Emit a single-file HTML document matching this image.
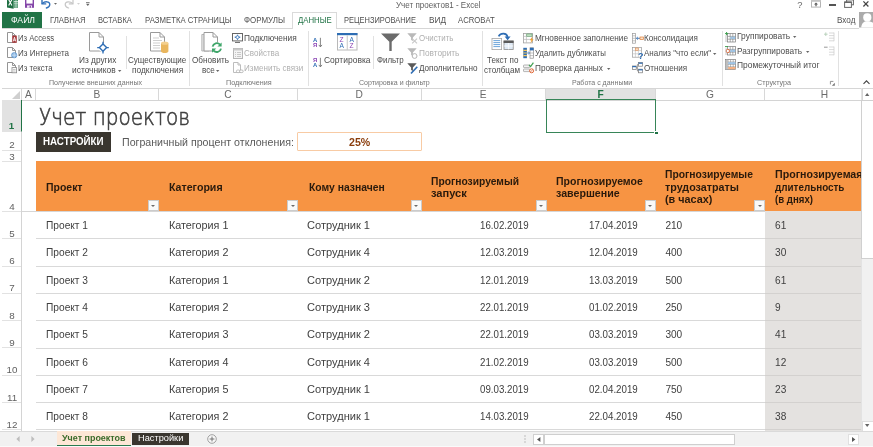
<!DOCTYPE html>
<html lang="ru">
<head>
<meta charset="utf-8">
<title>Учет проектов1 - Excel</title>
<style>
*{box-sizing:border-box;margin:0;padding:0}
html,body{width:873px;height:447px;overflow:hidden;background:#fff}
body{font-family:"Liberation Sans",sans-serif;color:#444;position:relative}
#app{will-change:transform;position:absolute;left:0;top:0;width:873px;height:447px;overflow:hidden;background:#fff}
.a{position:absolute;white-space:nowrap;transform-origin:0 50%}
svg{position:absolute;overflow:visible}
.ttl{top:-0.4px;font-size:9px;color:#606060;line-height:11px}
.tab{top:14.6px;font-size:8.2px;line-height:12px;color:#505050}
#file{left:2px;top:12px;width:40px;height:16px;background:#217346;color:#fff;text-align:center;font-size:8.5px;line-height:16px}
#tabline{left:2px;top:28px;width:857px;height:1px;background:#d6d6d6}
#acttab{left:292px;top:12px;width:45px;height:17px;border:1px solid #dadada;border-bottom:none;background:#fff}
.rt{font-size:8.4px;line-height:11px;color:#4c4c4c}
.rt.g{color:#b0b0b0}
.gl{font-size:7.2px;line-height:10px;color:#757575}
.gs{top:31px;width:1px;height:55px;background:#e1e1e1}
.ss{width:1px;background:#e1e1e1}
#ribline{left:2px;top:87.6px;width:860px;height:1px;background:#d6d6d6}
.ch{top:88.6px;height:11.4px;font-size:10.2px;line-height:12.6px;color:#6a6a6a;text-align:center;border-right:1px solid #d8d8d8;background:#fff}
.rh{left:2px;width:20px;font-size:9.8px;color:#606060;text-align:center;border-bottom:1px solid #e2e2e2;background:#fff}
.rh span{position:absolute;left:0;right:0;bottom:-0.6px;line-height:10px}
.hd{font-size:10px;font-weight:bold;color:#2a1a0c;line-height:13.2px;white-space:pre}
.fb{width:11px;height:11px;background:#f9f9f9;border:1px solid #cbcbcb;top:200.2px}
.fb:after{content:"";position:absolute;left:2.5px;top:3.5px;border-left:2px solid transparent;border-right:2px solid transparent;border-top:2.4px solid #6a6a6a}
.c{font-size:10.1px;color:#404040;line-height:13px}
.rl{left:35.5px;width:729.5px;height:1px;background:#d9d9d9}

</style>
</head>
<body>
<div id="app">
<!-- sec_title -->
<svg style="left:7px;top:-5px" width="12" height="14" viewBox="0 0 12 14"><rect x="6" y="1.5" width="5" height="11" fill="#e8f3ec"/><path d="M6.6 3.4h4.4M6.6 5.6h4.4M6.6 7.8h4.4M6.6 10h4.4M6.6 12h4.4" stroke="#3f8f62" stroke-width="1.3"/><path d="M9 1.5V12.6" stroke="#e8f3ec" stroke-width="0.6"/><path d="M0 1.6 L6.6 0.2 V13.8 L0 12.4 Z" fill="#1f6f43"/><path d="M1.7 4.6 L4.9 10.6 M4.9 4.6 L1.7 10.6" stroke="#fff" stroke-width="1.1"/></svg>
<svg style="left:25px;top:-4px" width="9" height="12" viewBox="0 0 9 12"><path d="M0 0 H9 V11.8 H0 Z" fill="#8446a8"/><rect x="1.4" y="0" width="6.2" height="7.6" fill="#fff"/><rect x="2" y="9.4" width="5" height="2.4" fill="#f1e6f7"/><rect x="4.6" y="9.8" width="1.3" height="2" fill="#8446a8"/></svg>
<svg style="left:41px;top:-1px" width="10" height="10" viewBox="0 0 10 10"><path d="M1.4 4.4 C3.6 2.2 8.8 2 8.8 5.4 C8.8 7.4 7.2 8.4 5.4 9" fill="none" stroke="#2f6fb8" stroke-width="1.35" stroke-linecap="round"/><path d="M1 1.2 V4.9 H4.7" fill="none" stroke="#2f6fb8" stroke-width="1.4" stroke-linecap="round" stroke-linejoin="round"/></svg>
<svg style="left:54.2px;top:2.8px" width="3" height="1.8" viewBox="0 0 3 1.8"><path d="M0 0H3L1.5 1.8Z" fill="#666"/></svg>
<svg style="left:64px;top:-1px" width="10" height="10" viewBox="0 0 10 10"><path d="M8.6 4.4 C6.4 2.2 1.2 2 1.2 5.4 C1.2 7.4 2.8 8.4 4.6 9" fill="none" stroke="#c6c6c6" stroke-width="1.2" stroke-linecap="round"/><path d="M9 1.2 V4.9 H5.3" fill="none" stroke="#c6c6c6" stroke-width="1.2" stroke-linecap="round" stroke-linejoin="round"/></svg>
<svg style="left:77.2px;top:2.8px" width="3" height="1.8" viewBox="0 0 3 1.8"><path d="M0 0H3L1.5 1.8Z" fill="#d0d0d0"/></svg>
<svg style="left:86.4px;top:1.6px" width="3.6" height="4" viewBox="0 0 3.6 4"><path d="M0 0H3.6V0.8H0Z M0 1.8H3.6L1.8 3.9Z" fill="#666"/></svg>
<div class="a ttl" style="transform:scaleX(0.8943);left:395.8px">Учет проектов1 - Excel</div>
<div class="a" style="left:797.3px;top:-1.4px;font-size:9.4px;line-height:11px;color:#6a6a6a">?</div>
<svg style="left:811px;top:-0.5px" width="10" height="8" viewBox="0 0 10 8"><rect x="0.5" y="0.5" width="9" height="6.6" fill="#fff" stroke="#b4b4b4"/><rect x="0" y="0" width="10" height="1.8" fill="#c4c4c4"/><path d="M5 2.6 L7 4.6 H5.6 V6.2 H4.4 V4.6 H3Z" fill="#555"/></svg>
<div class="a" style="left:829px;top:4.3px;width:6.6px;height:1.5px;background:#555"></div>
<svg style="left:844px;top:-1px" width="10" height="9" viewBox="0 0 10 9"><rect x="2.6" y="0.4" width="6.8" height="5.4" fill="#fff" stroke="#666" stroke-width="1"/><rect x="2.4" y="0" width="7.2" height="1.4" fill="#666"/><rect x="0.6" y="3" width="6.8" height="5.4" fill="#fff" stroke="#666" stroke-width="1"/><rect x="0.4" y="2.6" width="7.2" height="1.4" fill="#666"/></svg>
<svg style="left:863.3px;top:1px" width="5.8" height="5.9" viewBox="0 0 5.8 5.9"><path d="M0.4 0.4L5.4 5.5M5.4 0.4L0.4 5.5" stroke="#444" stroke-width="1.25"/></svg>
<div id="tabline" class="a" style=""></div>
<div id="acttab" class="a" style=""></div>
<div id="file" class="a" style=""></div>
<div class="a tab" style="transform:scaleX(1.0542);left:10.5px;color:#fff">ФАЙЛ</div>
<div class="a tab" style="transform:scaleX(0.9478);left:49.9px">ГЛАВНАЯ</div>
<div class="a tab" style="transform:scaleX(0.9205);left:98.2px">ВСТАВКА</div>
<div class="a tab" style="transform:scaleX(0.9502);left:144.5px">РАЗМЕТКА СТРАНИЦЫ</div>
<div class="a tab" style="transform:scaleX(0.9683);left:243.5px">ФОРМУЛЫ</div>
<div class="a tab" style="transform:scaleX(0.9509);left:297.5px;color:#217346">ДАННЫЕ</div>
<div class="a tab" style="transform:scaleX(0.9143);left:343.5px">РЕЦЕНЗИРОВАНИЕ</div>
<div class="a tab" style="transform:scaleX(1.0055);left:428.5px">ВИД</div>
<div class="a tab" style="transform:scaleX(0.9414);left:457.5px">ACROBAT</div>
<div class="a" style="transform:scaleX(0.9708);left:837.1px;top:14px;font-size:8.4px;line-height:12px;color:#505050">Вход</div>
<svg style="left:858.6px;top:12.2px" width="14.5" height="15.5" viewBox="0 0 14.5 15.5"><rect width="14.5" height="15.5" fill="#ababab"/><circle cx="8.3" cy="5.4" r="4.1" fill="#fff"/><path d="M2.2 15.5 C2.6 11 5 9.2 8.3 9.2 C11.4 9.2 13.4 10 14.5 11.4 V15.5Z" fill="#fff"/></svg>
<!-- sec_ribbon -->
<svg style="left:6.5px;top:32px" width="11" height="12" viewBox="0 0 11 12"><path d="M0.5 0.5 H5.5 L8.5 3.5 V10.5 H0.5 Z" fill="#fff" stroke="#959595"/><path d="M5.5 0.5 V3.5 H8.5" fill="none" stroke="#959595"/><rect x="5.2" y="3.6" width="4.6" height="7.2" fill="#a4373a"/><path d="M6.3 9.4 L7.5 5.2 L8.7 9.4 M6.7 8.1 H8.3" stroke="#fff" stroke-width="0.85" fill="none"/></svg>
<svg style="left:6.5px;top:47px" width="11" height="12" viewBox="0 0 11 12"><path d="M0.5 0.5 H5.5 L8.5 3.5 V10.5 H0.5 Z" fill="#fff" stroke="#959595"/><path d="M5.5 0.5 V3.5 H8.5" fill="none" stroke="#959595"/><circle cx="7.2" cy="8.2" r="2.7" fill="#8db8e2" stroke="#4a86c5" stroke-width="0.6"/><path d="M4.6 8.2H9.8M7.2 5.6V10.8" stroke="#e3eefa" stroke-width="0.5"/></svg>
<svg style="left:6.5px;top:62px" width="11" height="12" viewBox="0 0 11 12"><path d="M0.5 0.5 H5.5 L8.5 3.5 V10.5 H0.5 Z" fill="#fff" stroke="#959595"/><path d="M5.5 0.5 V3.5 H8.5" fill="none" stroke="#959595"/><rect x="5" y="5.6" width="4.6" height="5.2" fill="#fff" stroke="#8a8a8a" stroke-width="0.8"/><path d="M6 7.4H8.6M6 9H8.6" stroke="#9a9a9a" stroke-width="0.6"/></svg>
<div class="a rt" style="transform:scaleX(0.9212);left:17.7px;top:32.5px;">Из Access</div>
<div class="a rt" style="transform:scaleX(0.9569);left:17.7px;top:47.5px;">Из Интернета</div>
<div class="a rt" style="transform:scaleX(0.9367);left:17.7px;top:62.5px;">Из текста</div>
<svg style="left:89px;top:32px" width="20" height="22" viewBox="0 0 20 22"><path d="M0.5 0.5 H10 L14.5 5 V19 H0.5 Z" fill="#fff" stroke="#9a9a9a"/><path d="M10 0.5 V5 H14.5" fill="none" stroke="#9a9a9a"/><circle cx="14" cy="15.6" r="4.4" fill="#fff"/><path d="M14 12 L17.6 15.6 L14 19.2 L10.4 15.6 Z" fill="#fff" stroke="#2e6db4" stroke-width="1.4"/><path d="M14 9.8 V12 M14 19.2 V21.4 M8.2 15.6 H10.4 M17.6 15.6 H19.8" stroke="#2e6db4" stroke-width="1.3"/></svg>
<div class="a rt" style="transform:scaleX(0.9907);left:78.5px;top:54.8px;">Из других</div>
<div class="a rt" style="transform:scaleX(1.0017);left:72.2px;top:65.1px;">источников</div>
<svg style="left:118.3px;top:70.1px" width="3.4" height="2" viewBox="0 0 4 2.4"><path d="M0 0H4L2 2.4Z" fill="#666"/></svg>
<div class="a ss" style="left:126px;top:36px;height:33px"></div>
<svg style="left:150px;top:32px" width="20" height="22" viewBox="0 0 20 22"><path d="M0.5 0.5 H10 L14.5 5 V19 H0.5 Z" fill="#fff" stroke="#9a9a9a"/><path d="M10 0.5 V5 H14.5" fill="none" stroke="#9a9a9a"/><path d="M3 6H9M3 8.5H12M3 11H10M3 13.5H10M3 16H10" stroke="#c9c9c9" stroke-width="0.9"/><path d="M11 11.2 V19.2 C11 20.4 12.7 21 14.7 21 C16.7 21 18.4 20.4 18.4 19.2 V11.2 Z" fill="#e9b65e"/><ellipse cx="14.7" cy="11.2" rx="3.7" ry="1.6" fill="#f3cf8e"/></svg>
<div class="a rt" style="transform:scaleX(0.9607);left:127.7px;top:54.8px;">Существующие</div>
<div class="a rt" style="transform:scaleX(0.9961);left:131.7px;top:65.1px;">подключения</div>
<div class="a gl" style="transform:scaleX(0.9849);left:49.4px;top:77.8px;">Получение внешних данных</div>
<div class="a gs" style="left:189px"></div>
<svg style="left:201px;top:32px" width="22" height="22" viewBox="0 0 22 22"><path d="M0.8 2.5 H8 V19 H0.8 Z" fill="#e6e6e6" stroke="#a8a8a8" stroke-width="0.8"/><path d="M3 0.5 H12 L16.5 5 V19 H3 Z" fill="#fff" stroke="#9a9a9a"/><path d="M12 0.5 V5 H16.5" fill="none" stroke="#9a9a9a"/><circle cx="15.8" cy="15.6" r="5.4" fill="#fff"/><path d="M11.6 14.6 A4.3 4.3 0 0 1 19 12.6" fill="none" stroke="#3fa66a" stroke-width="1.9"/><path d="M20.6 10.4 V14.6 H16.4 Z" fill="#3fa66a"/><path d="M20 16.6 A4.3 4.3 0 0 1 12.6 18.6" fill="none" stroke="#3fa66a" stroke-width="1.9"/><path d="M11 20.8 V16.6 H15.2 Z" fill="#3fa66a"/></svg>
<div class="a rt" style="transform:scaleX(0.9757);left:192.2px;top:54.8px;">Обновить</div>
<div class="a rt" style="transform:scaleX(0.9695);left:201.5px;top:65.1px;">все</div>
<svg style="left:215.8px;top:70.1px" width="3.4" height="2" viewBox="0 0 4 2.4"><path d="M0 0H4L2 2.4Z" fill="#666"/></svg>
<svg style="left:232px;top:32.5px" width="11" height="10" viewBox="0 0 11 10"><rect x="0.5" y="0.5" width="10" height="7.4" fill="#fff" stroke="#666"/><path d="M3 9.4H8" stroke="#666"/><path d="M5.5 1.8 L6.3 3.6 L8.2 4.2 L6.3 4.9 L5.5 6.7 L4.7 4.9 L2.8 4.2 L4.7 3.6 Z" fill="#fff" stroke="#2e6db4" stroke-width="0.8"/></svg>
<svg style="left:232.5px;top:47.5px" width="10" height="11" viewBox="0 0 10 11"><rect x="0.5" y="0.5" width="9" height="10" fill="#f4f4f4" stroke="#b5b5b5"/><rect x="0.5" y="0.5" width="9" height="2" fill="#c9c9c9"/><path d="M2 4.5H3M4 4.5H8M2 6.5H3M4 6.5H8M2 8.5H3M4 8.5H8" stroke="#bdbdbd" stroke-width="0.8"/></svg>
<svg style="left:232.5px;top:62px" width="11" height="12" viewBox="0 0 11 12"><path d="M0.5 0.5 H5 L7.5 3 V10.5 H0.5 Z" fill="#fff" stroke="#bdbdbd"/><path d="M5 0.5 V3 H7.5" fill="none" stroke="#bdbdbd"/><rect x="3.4" y="8" width="3.6" height="2.6" rx="1.3" fill="#fff" stroke="#b0b0b0" stroke-width="0.8"/><rect x="6.6" y="8" width="3.6" height="2.6" rx="1.3" fill="#fff" stroke="#b0b0b0" stroke-width="0.8"/></svg>
<div class="a rt" style="transform:scaleX(0.9965);left:243.9px;top:32.5px;">Подключения</div>
<div class="a rt g" style="transform:scaleX(0.9570);left:243.9px;top:47.5px;">Свойства</div>
<div class="a rt g" style="transform:scaleX(0.9611);left:243.9px;top:62.5px;">Изменить связи</div>
<div class="a gl" style="transform:scaleX(1.0047);left:225.7px;top:77.8px;">Подключения</div>
<div class="a gs" style="left:308px"></div>
<svg style="left:312.6px;top:36.8px" width="10" height="11" viewBox="0 0 10 11"><text x="0" y="4.8" font-family="Liberation Sans,sans-serif" font-size="5.9" font-weight="bold" fill="#2e6db4">A</text><text x="0" y="10.2" font-family="Liberation Sans,sans-serif" font-size="5.9" font-weight="bold" fill="#8b45b5">Я</text><path d="M7.4 0.8 V9.6 M5.8 7.9 L7.4 9.9 L9 7.9" fill="none" stroke="#666" stroke-width="0.8"/></svg>
<svg style="left:312.6px;top:56.6px" width="10" height="11" viewBox="0 0 10 11"><text x="0" y="4.8" font-family="Liberation Sans,sans-serif" font-size="5.9" font-weight="bold" fill="#8b45b5">Я</text><text x="0" y="10.2" font-family="Liberation Sans,sans-serif" font-size="5.9" font-weight="bold" fill="#2e6db4">A</text><path d="M7.4 0.8 V9.6 M5.8 7.9 L7.4 9.9 L9 7.9" fill="none" stroke="#666" stroke-width="0.8"/></svg>
<svg style="left:337px;top:33px" width="21" height="18" viewBox="0 0 21 18"><rect x="0.5" y="0.5" width="19.5" height="16.5" fill="#fff" stroke="#b8b8b8"/><rect x="0" y="0" width="20.5" height="2.2" fill="#2e6db4"/><path d="M10.25 2.2V17" stroke="#c6c6c6"/><text x="2.6" y="9" font-family="Liberation Sans,sans-serif" font-size="6.6" fill="#8b45b5">Z</text><text x="2.4" y="15.4" font-family="Liberation Sans,sans-serif" font-size="6.6" fill="#2e6db4">A</text><text x="12.4" y="9" font-family="Liberation Sans,sans-serif" font-size="6.6" fill="#2e6db4">A</text><text x="12.6" y="15.4" font-family="Liberation Sans,sans-serif" font-size="6.6" fill="#8b45b5">Z</text></svg>
<div class="a rt" style="transform:scaleX(1.0116);left:324.0px;top:54.5px;">Сортировка</div>
<div class="a ss" style="left:373px;top:36px;height:33px"></div>
<svg style="left:381px;top:33px" width="19" height="18" viewBox="0 0 19 18"><path d="M0 0.4 H19 L10.7 8.8 V18 H8.3 V8.8 Z" fill="#6b6b6b"/></svg>
<div class="a rt" style="transform:scaleX(0.9453);left:376.9px;top:54.5px;">Фильтр</div>
<svg style="left:407px;top:32.5px" width="11" height="11" viewBox="0 0 11 11"><path d="M0.3 0.3 H9.7 L5.9 4.4 V8 L4.1 7 V4.4 Z" fill="#b9b9b9"/><path d="M5.2 5.6 L10 10.4 M10 5.6 L5.2 10.4" stroke="#c9c9c9" stroke-width="1.2"/></svg>
<svg style="left:407px;top:47.5px" width="11" height="11" viewBox="0 0 11 11"><path d="M0.3 0.3 H9.7 L5.9 4.4 V8 L4.1 7 V4.4 Z" fill="#b9b9b9"/><circle cx="7.6" cy="8" r="2.4" fill="#fff" stroke="#b5b5b5" stroke-width="1"/></svg>
<svg style="left:407px;top:62.5px" width="11" height="11" viewBox="0 0 11 11"><path d="M0.3 0.3 H9.7 L5.9 4.4 V8 L4.1 7 V4.4 Z" fill="#5a5a5a"/><path d="M4 10.5 L10.3 3.8" stroke="#2e6db4" stroke-width="1.6"/></svg>
<div class="a rt g" style="transform:scaleX(0.9433);left:418.5px;top:32.5px;">Очистить</div>
<div class="a rt g" style="transform:scaleX(0.9880);left:418.5px;top:47.5px;">Повторить</div>
<div class="a rt" style="transform:scaleX(0.9705);left:418.5px;top:62.5px;">Дополнительно</div>
<div class="a gl" style="transform:scaleX(0.9811);left:359.3px;top:77.8px;">Сортировка и фильтр</div>
<div class="a gs" style="left:481.5px"></div>
<svg style="left:491px;top:32px" width="23" height="19" viewBox="0 0 23 19"><rect x="1" y="6.4" width="9.6" height="11.2" fill="#fff" stroke="#a6a6a6" stroke-width="0.8"/><path d="M2.4 8.6H9.2M2.4 10.6H9.2M2.4 12.6H9.2M2.4 14.6H9.2" stroke="#5b9bd5" stroke-width="0.9"/><rect x="13" y="9" width="9.2" height="8.4" fill="#dfeaf6" stroke="#8a8a8a" stroke-width="0.8"/><rect x="12.6" y="8.6" width="10" height="2.4" fill="#5a5a5a"/><path d="M17.6 11V17.4M13 14H22.2" stroke="#fff" stroke-width="0.8"/><path d="M7.6 4.4 C9.6 0.6 15.6 0.4 16.6 5" fill="none" stroke="#2e6db4" stroke-width="1.7"/><path d="M13.6 4.4 H19.6 L16.6 8.2 Z" fill="#2e6db4"/></svg>
<div class="a rt" style="transform:scaleX(0.9629);left:487.1px;top:54.5px;">Текст по</div>
<div class="a rt" style="transform:scaleX(0.9648);left:484.4px;top:65.1px;">столбцам</div>
<svg style="left:523px;top:32.5px" width="11" height="11" viewBox="0 0 11 11"><rect x="0.5" y="0.5" width="9" height="9.4" fill="#fff" stroke="#a0a0a0" stroke-width="0.8"/><path d="M0.5 3.4H9.5M0.5 6.4H9.5M3.4 0.5V9.9" stroke="#b8b8b8" stroke-width="0.7"/><rect x="3.8" y="1" width="5.2" height="2.2" fill="#c9e3c6" stroke="#4a9a5c" stroke-width="0.5"/><path d="M9.4 3.6 L6.8 7.2 H8.4 L7.4 10.6 L10.6 6.2 H8.9 Z" fill="#f0a030"/></svg>
<svg style="left:523px;top:47px" width="11" height="12" viewBox="0 0 11 12"><rect x="0.3" y="0.8" width="3.6" height="10.4" fill="#2e6db4"/><path d="M0.3 3.4H3.9M0.3 6H3.9M0.3 8.6H3.9" stroke="#f2c55c" stroke-width="1.2"/><rect x="7" y="0.8" width="3.6" height="10.4" fill="#fff" stroke="#8a8a8a" stroke-width="0.7"/><rect x="7" y="0.8" width="3.6" height="2.6" fill="#2e6db4"/><path d="M7 6H10.6M7 8.6H10.6" stroke="#9a9a9a" stroke-width="0.6"/><path d="M4.2 6 H6.4 M5.4 4.9 L6.6 6 L5.4 7.1" stroke="#2e6db4" stroke-width="0.8" fill="none"/></svg>
<svg style="left:523px;top:62px" width="11" height="12" viewBox="0 0 11 12"><rect x="0.5" y="3" width="6.4" height="2.6" rx="0.6" fill="#f2f2f2" stroke="#9a9a9a" stroke-width="0.7"/><rect x="0.5" y="7" width="6.4" height="2.6" rx="0.6" fill="#f2f2f2" stroke="#9a9a9a" stroke-width="0.7"/><path d="M6 2.8 L7.6 4.6 L10.4 0.6" fill="none" stroke="#3fa050" stroke-width="1.2"/><circle cx="8.6" cy="8.8" r="2" fill="#fff" stroke="#e0693a" stroke-width="1"/><path d="M7.2 10.2 L10 7.4" stroke="#e0693a" stroke-width="0.8"/></svg>
<div class="a rt" style="transform:scaleX(0.9804);left:535.1px;top:32.5px;">Мгновенное заполнение</div>
<div class="a rt" style="transform:scaleX(0.9360);left:535.1px;top:47.5px;">Удалить дубликаты</div>
<div class="a rt" style="transform:scaleX(0.9848);left:535.1px;top:62.5px;">Проверка данных</div>
<svg style="left:607.0px;top:67.6px" width="3.4" height="2" viewBox="0 0 4 2.4"><path d="M0 0H4L2 2.4Z" fill="#666"/></svg>
<svg style="left:632px;top:32.5px" width="12" height="11" viewBox="0 0 12 11"><rect x="0.4" y="0.4" width="3.2" height="9.8" fill="#fff" stroke="#9a9a9a" stroke-width="0.7"/><path d="M0.4 2.8H3.6M0.4 5.3H3.6M0.4 7.8H3.6" stroke="#9a9a9a" stroke-width="0.6"/><path d="M8 5.3 H4.6 M5.8 4 L4.4 5.3 L5.8 6.6" fill="none" stroke="#2e6db4" stroke-width="0.9"/><rect x="8" y="4" width="3.6" height="2.6" fill="#fbe0c8" stroke="#e0803a" stroke-width="0.7"/></svg>
<svg style="left:632px;top:47px" width="12" height="12" viewBox="0 0 12 12"><rect x="0.4" y="0.6" width="9" height="9.6" fill="#fff" stroke="#9a9a9a" stroke-width="0.7"/><path d="M0.4 3.6H9.4M0.4 6.8H9.4M3.4 0.6V10.2M6.4 0.6V10.2" stroke="#b8b8b8" stroke-width="0.6"/><rect x="3.6" y="1" width="2.6" height="2.4" fill="#fbe0c8" stroke="#e0803a" stroke-width="0.5"/><text x="6" y="11.6" font-family="Liberation Sans,sans-serif" font-size="9" font-weight="bold" fill="#2e6db4">?</text></svg>
<svg style="left:632px;top:62px" width="12" height="12" viewBox="0 0 12 12"><rect x="0.4" y="4" width="3.8" height="3.4" fill="#fff" stroke="#777" stroke-width="0.7"/><rect x="0.4" y="4" width="3.8" height="1.2" fill="#2e6db4"/><rect x="6.6" y="0.6" width="4" height="3.6" fill="#fff" stroke="#777" stroke-width="0.7"/><rect x="6.6" y="0.6" width="4" height="1.2" fill="#2e6db4"/><rect x="6.6" y="7.2" width="4" height="3.6" fill="#fff" stroke="#777" stroke-width="0.7"/><rect x="6.6" y="7.2" width="4" height="1.2" fill="#2e6db4"/><path d="M4.2 5.8 H5.4 V2.4 H6.6 M5.4 5.8 V9 H6.6" fill="none" stroke="#777" stroke-width="0.7"/></svg>
<div class="a rt" style="transform:scaleX(0.9617);left:644.4px;top:32.5px;">Консолидация</div>
<div class="a rt" style="transform:scaleX(0.9565);left:644.4px;top:47.5px;">Анализ "что если"</div>
<svg style="left:712.9px;top:52.6px" width="3.4" height="2" viewBox="0 0 4 2.4"><path d="M0 0H4L2 2.4Z" fill="#666"/></svg>
<div class="a rt" style="transform:scaleX(0.9608);left:644.4px;top:62.5px;">Отношения</div>
<div class="a gl" style="transform:scaleX(0.9779);left:571.5px;top:77.8px;">Работа с данными</div>
<div class="a gs" style="left:721.6px"></div>
<svg style="left:725px;top:31.5px" width="11" height="11" viewBox="0 0 11 11"><rect x="2.6" y="1.6" width="7.8" height="8.4" fill="#fff" stroke="#7a7a7a" stroke-width="0.7"/><path d="M2.6 4.4H10.4M2.6 7.2H10.4M5.2 1.6V10M7.8 1.6V10" stroke="#7a7a7a" stroke-width="0.6"/><rect x="5.4" y="4.6" width="2.2" height="2.4" fill="#9cc3e6"/><rect x="8" y="4.6" width="2.2" height="2.4" fill="#9cc3e6"/><path d="M0 1.6H3.2M1.6 0V3.2" stroke="#3fa050" stroke-width="1"/><path d="M1 3.2V10" stroke="#9a9a9a" stroke-width="0.6"/></svg>
<svg style="left:725px;top:45px" width="11" height="11" viewBox="0 0 11 11"><rect x="2.6" y="1.6" width="7.8" height="8.4" fill="#fff" stroke="#7a7a7a" stroke-width="0.7"/><path d="M2.6 4.4H10.4M2.6 7.2H10.4M5.2 1.6V10M7.8 1.6V10" stroke="#7a7a7a" stroke-width="0.6"/><rect x="5.4" y="4.6" width="2.2" height="2.4" fill="#9cc3e6"/><rect x="8" y="4.6" width="2.2" height="2.4" fill="#9cc3e6"/><path d="M0 1.6H3" stroke="#3fa050" stroke-width="1"/><circle cx="2.8" cy="6" r="1.7" fill="#fff" stroke="#e0693a" stroke-width="0.9"/><path d="M1 3.2V10" stroke="#9a9a9a" stroke-width="0.6"/></svg>
<svg style="left:725px;top:59px" width="11" height="11" viewBox="0 0 11 11"><rect x="0.4" y="0.6" width="10.2" height="9.8" fill="#fff" stroke="#7a7a7a" stroke-width="0.7"/><path d="M0.4 3H10.6M0.4 5.4H10.6M0.4 7.8H10.6M3 0.6V10.4M5.6 0.6V10.4M8.2 0.6V10.4" stroke="#8a8a8a" stroke-width="0.6"/><rect x="3.2" y="3.2" width="7.2" height="2" fill="#9cc3e6"/><rect x="3.2" y="8" width="7.2" height="2.2" fill="#f4b183"/><rect x="0.6" y="0.8" width="2.2" height="9.4" fill="#bdbdbd"/></svg>
<div class="a rt" style="transform:scaleX(1.0053);left:736.5px;top:31.2px;">Группировать</div>
<svg style="left:793.3px;top:36.4px" width="3.4" height="2" viewBox="0 0 4 2.4"><path d="M0 0H4L2 2.4Z" fill="#666"/></svg>
<div class="a rt" style="transform:scaleX(0.9907);left:736.5px;top:45.5px;">Разгруппировать</div>
<svg style="left:805.6px;top:50.7px" width="3.4" height="2" viewBox="0 0 4 2.4"><path d="M0 0H4L2 2.4Z" fill="#666"/></svg>
<div class="a rt" style="transform:scaleX(1.0072);left:736.5px;top:60.2px;">Промежуточный итог</div>
<svg style="left:823.5px;top:32px" width="11" height="10" viewBox="0 0 11 10"><path d="M0 2.2H3.6M1.8 0.4V4" stroke="#b5cfb8" stroke-width="0.9"/><path d="M5 1H10M5 3.6H10M5 6.2H10M5 8.8H10M10 0.6V9.2" stroke="#cfcfcf" stroke-width="0.8"/></svg>
<svg style="left:823.5px;top:46px" width="11" height="10" viewBox="0 0 11 10"><path d="M0 1.2H3.6" stroke="#8c8c8c" stroke-width="0.9"/><path d="M5 1H10M5 3.6H10M5 6.2H10M5 8.8H10M10 0.6V9.2" stroke="#cfcfcf" stroke-width="0.8"/></svg>
<div class="a gl" style="transform:scaleX(0.9997);left:757.4px;top:78.0px;">Структура</div>
<svg style="left:830px;top:81px" width="5" height="5" viewBox="0 0 5 5"><path d="M0.4 3.4V0.4H3.4" fill="none" stroke="#777" stroke-width="0.8"/><path d="M4.8 1.8V4.8H1.8Z" fill="#777"/></svg>
<div class="a gs" style="left:837.7px"></div>
<svg style="left:863px;top:80px" width="7" height="4.4" viewBox="0 0 7 4.4"><path d="M0.5 4 L3.5 0.8 L6.5 4" fill="none" stroke="#444" stroke-width="1.1"/></svg>
<div id="ribline" class="a" style=""></div>
<!-- sec_grid -->
<div class="a" style="left:2px;top:89px;width:20px;height:11px;border-right:1px solid #d8d8d8;background:#fff"></div>
<svg style="left:12px;top:91px" width="8" height="8" viewBox="0 0 8 8"><path d="M8 0V8H0Z" fill="#cfcfcf"/></svg>
<div class="a ch" style="left:22px;width:13.899999999999999px">A</div>
<div class="a ch" style="left:35.9px;width:123.1px">B</div>
<div class="a ch" style="left:159px;width:139px">C</div>
<div class="a ch" style="left:298px;width:123.5px">D</div>
<div class="a ch" style="left:421.5px;width:124.5px">E</div>
<div class="a ch" style="left:546px;width:110px;background:#e2e2e2;color:#217346;font-weight:bold">F</div>
<div class="a ch" style="left:656px;width:109px">G</div>
<div class="a ch" style="left:765px;width:96px;padding-left:23px;border-right:none">H</div>
<div class="a" style="left:2px;top:99.5px;width:859px;height:1px;background:#d4d4d4"></div>
<div class="a rh" style="top:100.0px;height:31.9px;background:#e2e2e2;color:#217346;font-weight:bold;border-right:1.3px solid #217346"><span>1</span></div>
<div class="a rh" style="top:131.9px;height:19.0px"><span>2</span></div>
<div class="a rh" style="top:150.9px;height:11.2px"><span>3</span></div>
<div class="a rh" style="top:162.1px;height:49.9px"><span>4</span></div>
<div class="a rh" style="top:212.0px;height:27.3px"><span>5</span></div>
<div class="a rh" style="top:239.3px;height:27.3px"><span>6</span></div>
<div class="a rh" style="top:266.6px;height:27.3px"><span>7</span></div>
<div class="a rh" style="top:293.9px;height:27.3px"><span>8</span></div>
<div class="a rh" style="top:321.2px;height:27.3px"><span>9</span></div>
<div class="a rh" style="top:348.5px;height:27.3px"><span>10</span></div>
<div class="a rh" style="top:375.8px;height:27.3px"><span>11</span></div>
<div class="a rh" style="top:403.1px;height:27.3px"><span>12</span></div>
<div class="a" style="left:21px;top:132px;width:1px;height:299px;background:#d4d4d4"></div>
<div class="a" style="transform:scaleX(0.8639);left:39.3px;top:104.1px;font-family:DejaVu Sans Light,DejaVu Sans,sans-serif;font-weight:200;font-size:23.2px;line-height:26px;color:#404040;-webkit-text-stroke:0.6px #404040">Учет проектов</div>
<div class="a" style="left:35.6px;top:132.3px;width:75.4px;height:19.3px;background:#3a362f"></div>
<div class="a" style="transform:scaleX(0.9583);left:43.2px;top:136.4px;font-size:10.2px;font-weight:bold;line-height:12px;color:#fff">НАСТРОЙКИ</div>
<div class="a" style="transform:scaleX(1.0224);left:122.1px;top:136px;font-size:10.4px;line-height:13px;color:#595959">Пограничный процент отклонения:</div>
<div class="a" style="left:297.2px;top:131.6px;width:124.8px;height:19.3px;border:1px solid #f8cba4;border-radius:1px;background:#fff"></div>
<div class="a" style="transform:scaleX(1.0592);left:348.7px;top:136px;font-size:10px;font-weight:bold;line-height:13px;color:#8a3d0c">25%</div>
<div class="a" style="left:545.6px;top:98.8px;width:110.6px;height:34px;border:1.1px solid #378558"></div>
<div class="a" style="left:654.2px;top:130.8px;width:3.4px;height:3.4px;background:#217346;border:0.8px solid #fff;border-right:none;border-bottom:none"></div>
<div class="a" style="left:35.5px;top:161.4px;width:825.5px;height:49.6px;background:#f79443"></div>
<div class="a hd" style="transform:scaleX(1.0466);left:45.5px;top:180.6px">Проект</div>
<div class="a hd" style="transform:scaleX(1.0617);left:168.8px;top:180.6px">Категория</div>
<div class="a hd" style="transform:scaleX(1.0364);left:309.0px;top:180.6px">Кому назначен</div>
<div class="a hd" style="transform:scaleX(1.0277);left:430.5px;top:174.7px">Прогнозируемый</div>
<div class="a hd" style="transform:scaleX(1.1074);left:430.5px;top:187.2px">запуск</div>
<div class="a hd" style="transform:scaleX(1.0523);left:556.2px;top:174.7px">Прогнозируемое</div>
<div class="a hd" style="transform:scaleX(1.0664);left:556.2px;top:187.2px">завершение</div>
<div class="a hd" style="transform:scaleX(1.0335);left:665.1px;top:168.4px">Прогнозируемые</div>
<div class="a hd" style="transform:scaleX(1.0722);left:665.1px;top:180.9px">трудозатраты</div>
<div class="a hd" style="transform:scaleX(1.0830);left:665.1px;top:193.4px">(в часах)</div>
<div class="a" style="left:765px;top:161px;width:96px;height:50px;overflow:hidden">
<div class="a hd" style="transform:scaleX(1.0644);left:9.8px;top:7.4px">Прогнозируемая</div>
<div class="a hd" style="transform:scaleX(0.9853);left:9.8px;top:19.9px">длительность</div>
<div class="a hd" style="transform:scaleX(0.9651);left:9.8px;top:32.4px">(в днях)</div>
</div>
<div class="a fb" style="left:147.5px"></div>
<div class="a fb" style="left:287px"></div>
<div class="a fb" style="left:410.7px"></div>
<div class="a fb" style="left:535.5px"></div>
<div class="a fb" style="left:644.5px"></div>
<div class="a fb" style="left:754px"></div>
<div class="a" style="left:22px;top:211px;width:743px;height:1px;background:#d6d6d6"></div>
<div class="a" style="left:765px;top:211.4px;width:96px;height:220.2px;background:#e4e2e0"></div>
<div class="a c" style="transform:scaleX(1.0079);left:45.5px;top:219.1px">Проект 1</div>
<div class="a c" style="transform:scaleX(1.0682);left:168.8px;top:219.1px">Категория 1</div>
<div class="a c" style="transform:scaleX(1.0965);left:307.3px;top:219.1px">Сотрудник 1</div>
<div class="a c" style="transform:scaleX(0.9618);left:480.1px;top:219.1px">16.02.2019</div>
<div class="a c" style="transform:scaleX(0.9657);left:589.3px;top:219.1px">17.04.2019</div>
<div class="a c" style="left:665.4px;top:219.1px">210</div>
<div class="a c" style="left:775.1px;top:219.1px">61</div>
<div class="a rl" style="top:238.3px"></div>
<div class="a" style="left:765px;top:238.3px;width:96px;height:1px;background:#d3d1cf"></div>
<div class="a c" style="transform:scaleX(1.0079);left:45.5px;top:246.4px">Проект 2</div>
<div class="a c" style="transform:scaleX(1.0682);left:168.8px;top:246.4px">Категория 2</div>
<div class="a c" style="transform:scaleX(1.0965);left:307.3px;top:246.4px">Сотрудник 4</div>
<div class="a c" style="transform:scaleX(0.9618);left:480.1px;top:246.4px">12.03.2019</div>
<div class="a c" style="transform:scaleX(0.9657);left:589.3px;top:246.4px">12.04.2019</div>
<div class="a c" style="left:665.4px;top:246.4px">400</div>
<div class="a c" style="left:775.1px;top:246.4px">30</div>
<div class="a rl" style="top:265.6px"></div>
<div class="a" style="left:765px;top:265.6px;width:96px;height:1px;background:#d3d1cf"></div>
<div class="a c" style="transform:scaleX(1.0079);left:45.5px;top:273.7px">Проект 3</div>
<div class="a c" style="transform:scaleX(1.0682);left:168.8px;top:273.7px">Категория 1</div>
<div class="a c" style="transform:scaleX(1.0965);left:307.3px;top:273.7px">Сотрудник 2</div>
<div class="a c" style="transform:scaleX(0.9618);left:480.1px;top:273.7px">12.01.2019</div>
<div class="a c" style="transform:scaleX(0.9657);left:589.3px;top:273.7px">13.03.2019</div>
<div class="a c" style="left:665.4px;top:273.7px">500</div>
<div class="a c" style="left:775.1px;top:273.7px">61</div>
<div class="a rl" style="top:292.9px"></div>
<div class="a" style="left:765px;top:292.9px;width:96px;height:1px;background:#d3d1cf"></div>
<div class="a c" style="transform:scaleX(1.0079);left:45.5px;top:301.0px">Проект 4</div>
<div class="a c" style="transform:scaleX(1.0682);left:168.8px;top:301.0px">Категория 2</div>
<div class="a c" style="transform:scaleX(1.0965);left:307.3px;top:301.0px">Сотрудник 3</div>
<div class="a c" style="transform:scaleX(0.9618);left:480.1px;top:301.0px">22.01.2019</div>
<div class="a c" style="transform:scaleX(0.9657);left:589.3px;top:301.0px">01.02.2019</div>
<div class="a c" style="left:665.4px;top:301.0px">250</div>
<div class="a c" style="left:775.1px;top:301.0px">9</div>
<div class="a rl" style="top:320.2px"></div>
<div class="a" style="left:765px;top:320.2px;width:96px;height:1px;background:#d3d1cf"></div>
<div class="a c" style="transform:scaleX(1.0079);left:45.5px;top:328.3px">Проект 5</div>
<div class="a c" style="transform:scaleX(1.0682);left:168.8px;top:328.3px">Категория 3</div>
<div class="a c" style="transform:scaleX(1.0965);left:307.3px;top:328.3px">Сотрудник 2</div>
<div class="a c" style="transform:scaleX(0.9618);left:480.1px;top:328.3px">22.01.2019</div>
<div class="a c" style="transform:scaleX(0.9657);left:589.3px;top:328.3px">03.03.2019</div>
<div class="a c" style="left:665.4px;top:328.3px">300</div>
<div class="a c" style="left:775.1px;top:328.3px">41</div>
<div class="a rl" style="top:347.5px"></div>
<div class="a" style="left:765px;top:347.5px;width:96px;height:1px;background:#d3d1cf"></div>
<div class="a c" style="transform:scaleX(1.0079);left:45.5px;top:355.6px">Проект 6</div>
<div class="a c" style="transform:scaleX(1.0682);left:168.8px;top:355.6px">Категория 4</div>
<div class="a c" style="transform:scaleX(1.0965);left:307.3px;top:355.6px">Сотрудник 4</div>
<div class="a c" style="transform:scaleX(0.9618);left:480.1px;top:355.6px">21.02.2019</div>
<div class="a c" style="transform:scaleX(0.9657);left:589.3px;top:355.6px">03.03.2019</div>
<div class="a c" style="left:665.4px;top:355.6px">500</div>
<div class="a c" style="left:775.1px;top:355.6px">12</div>
<div class="a rl" style="top:374.8px"></div>
<div class="a" style="left:765px;top:374.8px;width:96px;height:1px;background:#d3d1cf"></div>
<div class="a c" style="transform:scaleX(1.0079);left:45.5px;top:382.9px">Проект 7</div>
<div class="a c" style="transform:scaleX(1.0682);left:168.8px;top:382.9px">Категория 5</div>
<div class="a c" style="transform:scaleX(1.0965);left:307.3px;top:382.9px">Сотрудник 1</div>
<div class="a c" style="transform:scaleX(0.9618);left:480.1px;top:382.9px">09.03.2019</div>
<div class="a c" style="transform:scaleX(0.9657);left:589.3px;top:382.9px">02.04.2019</div>
<div class="a c" style="left:665.4px;top:382.9px">750</div>
<div class="a c" style="left:775.1px;top:382.9px">23</div>
<div class="a rl" style="top:402.1px"></div>
<div class="a" style="left:765px;top:402.1px;width:96px;height:1px;background:#d3d1cf"></div>
<div class="a c" style="transform:scaleX(1.0079);left:45.5px;top:410.2px">Проект 8</div>
<div class="a c" style="transform:scaleX(1.0682);left:168.8px;top:410.2px">Категория 2</div>
<div class="a c" style="transform:scaleX(1.0965);left:307.3px;top:410.2px">Сотрудник 1</div>
<div class="a c" style="transform:scaleX(0.9618);left:480.1px;top:410.2px">14.03.2019</div>
<div class="a c" style="transform:scaleX(0.9657);left:589.3px;top:410.2px">22.04.2019</div>
<div class="a c" style="left:665.4px;top:410.2px">450</div>
<div class="a c" style="left:775.1px;top:410.2px">38</div>
<div class="a rl" style="top:429.4px"></div>
<div class="a" style="left:765px;top:429.4px;width:96px;height:1px;background:#d3d1cf"></div>
<div class="a" style="left:861px;top:88px;width:12px;height:344px;background:#f1f1f1;border-left:1px solid #e3e3e3"></div>
<div class="a" style="left:862px;top:88px;width:13px;height:12.5px;background:#fff;border:1px solid #d6d6d6"></div>
<svg style="left:865.4px;top:92.6px" width="4.4" height="3" viewBox="0 0 5 3.4"><path d="M0 3.4H5L2.5 0Z" fill="#666"/></svg>
<div class="a" style="left:861px;top:100px;width:14px;height:159px;background:#fff;border:1px solid #d0d0d0"></div>
<div class="a" style="left:862px;top:420.5px;width:13px;height:11px;background:#fff;border:1px solid #dedede"></div>
<svg style="left:865.2px;top:424.2px" width="4.4" height="3" viewBox="0 0 5 3.4"><path d="M0 0H5L2.5 3.4Z" fill="#666"/></svg>
<!-- sec_bottom -->
<div class="a" style="left:0;top:430.8px;width:873px;height:15px;background:#f1f1f1;border-top:1px solid #dadada"></div>
<div class="a" style="left:0;top:445.8px;width:873px;height:2px;background:#fafafa"></div>
<svg style="left:16px;top:436px" width="4" height="6" viewBox="0 0 4 6"><path d="M3.6 0V6L0.4 3Z" fill="#bdbdbd"/></svg>
<svg style="left:31px;top:436px" width="4" height="6" viewBox="0 0 4 6"><path d="M0.4 0V6L3.6 3Z" fill="#bdbdbd"/></svg>
<div class="a" style="left:56.5px;top:431px;width:74.5px;height:14.8px;background:#fde7d6;border-bottom:1.6px solid #2a7a4f"></div>
<div class="a" style="transform:scaleX(0.9955);left:61.9px;top:432px;font-size:9px;font-weight:bold;line-height:12px;color:#3a6b2a">Учет проектов</div>
<div class="a" style="left:131.6px;top:432.6px;width:57.4px;height:12px;background:#3a362f"></div>
<div class="a" style="transform:scaleX(1.0263);left:137.5px;top:432px;font-size:9px;line-height:12px;color:#fff">Настройки</div>
<svg style="left:207px;top:433.5px" width="10" height="10" viewBox="0 0 10 10"><circle cx="5" cy="5" r="4.3" fill="#f7f7f7" stroke="#8a8a8a" stroke-width="0.8"/><path d="M5 2.6V7.4M2.6 5H7.4" stroke="#666" stroke-width="0.9"/></svg>
<svg style="left:524px;top:435px" width="2" height="8" viewBox="0 0 2 8"><circle cx="1" cy="1" r="0.7" fill="#aaa"/><circle cx="1" cy="4" r="0.7" fill="#aaa"/><circle cx="1" cy="7" r="0.7" fill="#aaa"/></svg>
<div class="a" style="left:533px;top:433.5px;width:10.5px;height:11px;background:#fff;border:1px solid #d0d0d0"></div>
<svg style="left:536.5px;top:436.5px" width="3.4" height="5" viewBox="0 0 3.4 5"><path d="M3.4 0V5L0 2.5Z" fill="#555"/></svg>
<div class="a" style="left:543.5px;top:433.5px;width:191px;height:11px;background:#fff;border:1px solid #cfcfcf"></div>
<div class="a" style="left:848px;top:433.5px;width:11px;height:11px;background:#fff;border:1px solid #e0e0e0"></div>
<svg style="left:852px;top:436.5px" width="3.4" height="5" viewBox="0 0 3.4 5"><path d="M0 0V5L3.4 2.5Z" fill="#555"/></svg>
</div>
</body>
</html>
